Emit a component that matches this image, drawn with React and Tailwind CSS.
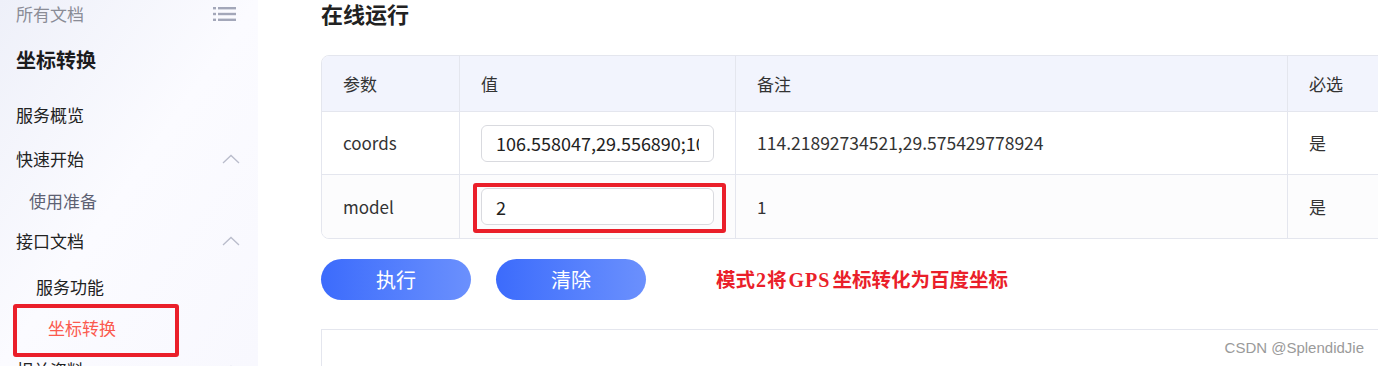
import React from 'react'

const font = { fontFamily: '"Noto Sans CJK SC", "Noto Sans", sans-serif' }

const ChevronUp = () => (
  <svg width="18" height="10" viewBox="0 0 18 10" fill="none" className="mr-[18px]">
    <polyline points="1,9 9,1.5 17,9" stroke="#b9bccb" strokeWidth="1.3" />
  </svg>
)

const MenuIcon = () => (
  <svg width="24" height="16" viewBox="0 0 24 16" fill="#a3a7b9">
    <rect x="0" y="1" width="3" height="2.4" />
    <rect x="5" y="1" width="18" height="2.4" />
    <rect x="0" y="6.8" width="3" height="2.4" />
    <rect x="5" y="6.8" width="18" height="2.4" />
    <rect x="0" y="12.6" width="3" height="2.4" />
    <rect x="5" y="12.6" width="18" height="2.4" />
  </svg>
)

const Sidebar = () => (
  <div className="relative w-[258px] shrink-0 h-full bg-gradient-to-br from-[#eef0f9] via-[#fbfbff] to-[#f8f8fe] text-[#222] text-[17px]">
    <div className="h-[28px] flex items-center justify-between pl-4 pr-[21px]">
      <span className="text-[#8a8c96]">所有文档</span>
      <MenuIcon />
    </div>
    <div className="h-[64px] flex items-center pl-4 text-[20px] font-bold text-[#1c1c1e]">坐标转换</div>
    <div className="h-[46px] flex items-center pl-4">服务概览</div>
    <div className="h-[42px] flex items-center justify-between pl-4">
      <span>快速开始</span>
      <ChevronUp />
    </div>
    <div className="h-[42px] flex items-center pl-[29px] text-[#5d6173]">使用准备</div>
    <div className="h-[38px] flex items-center justify-between pl-4">
      <span>接口文档</span>
      <ChevronUp />
    </div>
    <div className="h-[54px] flex items-center pl-[36px]">服务功能</div>
    <div className="h-[28px] flex items-center pl-[48px] text-[#fb5a4f]">坐标转换</div>
    <div className="h-[56px] flex items-center justify-between pl-4">
      <span>相关资料</span>
      <ChevronUp />
    </div>
    {/* annotation box */}
    <div className="absolute left-[13px] top-[304px] w-[166px] h-[53px] border-4 border-[#ea1f2a] rounded-[3px]" />
  </div>
)

const Cell = ({ children, className = '' }) => (
  <div className={`flex items-center px-[21px] border-r border-[#e4e6ee] last:border-r-0 ${className}`}>{children}</div>
)

const ValueInput = ({ value }) => (
  <input
    readOnly
    value={value}
    className="w-[235px] h-[37px] rounded-[6px] border border-[#d9dadf] bg-white px-[14px] text-[18px] text-[#222] outline-none"
  />
)

const App = () => {
  return (
    <div className="w-[1378px] h-[366px] overflow-hidden flex bg-white" style={font}>
      <Sidebar />
      <div className="relative flex-1 min-w-0 overflow-hidden pl-[63px] text-[#333]">
        <div className="h-[28px] flex items-center text-[22px] font-bold text-[#222] -mt-[1px]">在线运行</div>
        <div className="mt-[28px] w-[1080px] rounded-[8px] border border-[#e4e6ee] overflow-hidden text-[17px]">
          <div className="grid grid-cols-[138px_276px_552px_1fr] h-[56px] bg-[#f2f4fd] border-b border-[#e4e6ee]">
            <Cell>参数</Cell>
            <Cell>值</Cell>
            <Cell>备注</Cell>
            <Cell>必选</Cell>
          </div>
          <div className="grid grid-cols-[138px_276px_552px_1fr] h-[63px] border-b border-[#e4e6ee]">
            <Cell>coords</Cell>
            <Cell><ValueInput value="106.558047,29.556890;106.558047,29.556890" /></Cell>
            <Cell><span className="text-[17.5px]">114.21892734521,29.575429778924</span></Cell>
            <Cell>是</Cell>
          </div>
          <div className="grid grid-cols-[138px_276px_552px_1fr] h-[63px] bg-[#fcfcfd]">
            <Cell>model</Cell>
            <Cell><ValueInput value="2" /></Cell>
            <Cell>1</Cell>
            <Cell>是</Cell>
          </div>
        </div>
        {/* annotation box */}
        <div className="absolute left-[215px] top-[183px] w-[253px] h-[50px] border-4 border-[#ea1f2a] rounded-[3px]" />
        <div className="mt-[20px] flex items-center">
          <button className="w-[150px] h-[41px] rounded-full bg-gradient-to-r from-[#3c6bfc] to-[#6b90fd] text-white text-[20px]">执行</button>
          <button className="ml-[25px] w-[150px] h-[41px] rounded-full bg-gradient-to-r from-[#3c6bfc] to-[#6b90fd] text-white text-[20px]">清除</button>
          <span className="ml-[70px] text-[19.5px] font-semibold text-[#ea1f2a] whitespace-nowrap">
            模式
            <span className="font-bold px-[1px] text-[20px]" style={{ fontFamily: '"Liberation Serif", serif' }}>2</span>
            将
            <span className="font-bold px-[2px] tracking-[1px] text-[20px]" style={{ fontFamily: '"Liberation Serif", serif' }}>GPS</span>
            坐标转化为百度坐标
          </span>
        </div>
        <div className="mt-[29px] w-[1080px] h-[60px] border-t border-l border-[#e4e6ee]" />
        <div
          className="absolute right-[14px] top-[337px] text-[15px] text-[#9a9a9a] whitespace-nowrap"
          style={{ fontFamily: '"Liberation Sans", sans-serif' }}
        >
          CSDN @SplendidJie
        </div>
      </div>
    </div>
  )
}

export default App
